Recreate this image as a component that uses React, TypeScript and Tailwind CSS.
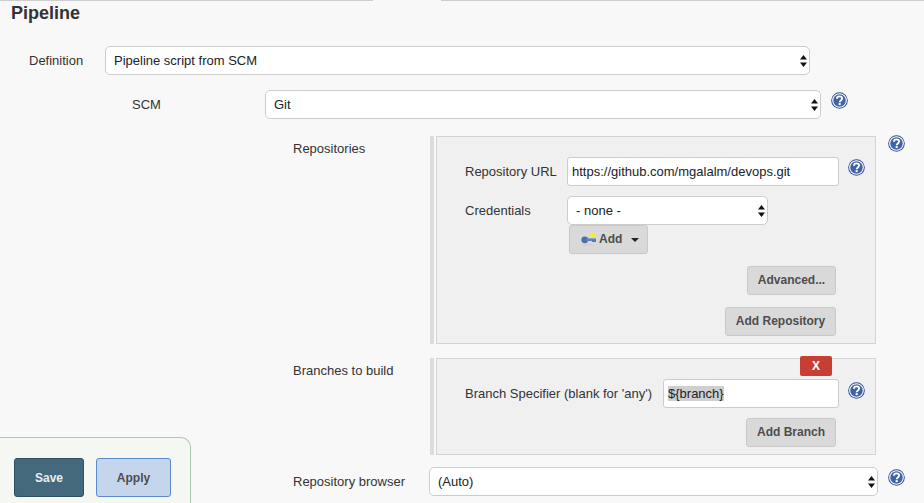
import React from "react";

const HelpIcon = ({ className = "" }: { className?: string }) => (
  <svg width="17" height="17" viewBox="0 0 17 17" className={`shrink-0 ${className}`}>
    <circle cx="8.5" cy="8.5" r="8.3" fill="#2f4c8f" />
    <circle cx="8.5" cy="8.5" r="6.8" fill="#3f62a8" stroke="#fff" strokeWidth="1.1" />
    <path
      d="M6 6.7C6 5.2 7.1 4.4 8.5 4.4s2.6.8 2.6 2.2c0 1.8-2.4 1.8-2.4 3.6"
      fill="none"
      stroke="#fff"
      strokeWidth="1.9"
    />
    <rect x="7.6" y="11.1" width="2.1" height="2" fill="#fff" />
  </svg>
);

const SelectBox = ({ value, className }: { value: string; className: string }) => (
  <div className={`relative h-[29px] shrink-0 ${className}`}>
    <select
      defaultValue={value}
      className="h-full w-full appearance-none rounded-[5px] border border-[#cccccc] bg-white pl-[8px] text-[13px] text-[#222] outline-none"
    >
      <option>{value}</option>
    </select>
    {/* up/down arrows */}
    <svg width="7" height="12" viewBox="0 0 7 12" className="absolute right-[3px] top-[9px]">
      <path d="M3.5 0L7 4.5H0z M3.5 12L0 7.5h7z" fill="#111" />
    </svg>
  </div>
);

const Button = ({ children, className }: { children: React.ReactNode; className: string }) => (
  <button
    className={`h-[29px] shrink-0 rounded-[3px] border border-[#c9c9c9] bg-[#d9d9d9] pb-[2px] text-[12px] font-bold text-[#4d4d4d] ${className}`}
  >
    {children}
  </button>
);

const KeyIcon = () => (
  <svg width="16" height="14" viewBox="0 0 16 14" className="shrink-0">
    <ellipse cx="7" cy="12.8" rx="6" ry="1" fill="#d0d0d0" />
    <circle cx="3.8" cy="7.8" r="3.4" fill="#4a6fa8" />
    <rect x="5" y="6.4" width="10" height="2.6" fill="#5f84bb" />
    <rect x="11" y="8.8" width="4" height="1" fill="#3f5f92" />
    <circle cx="11.8" cy="3.2" r="2.6" fill="#f5e84a" />
  </svg>
);

export default function App() {
  return (
    <div className="relative h-[503px] w-[924px] overflow-hidden bg-[#f8f8f8] font-['Liberation_Sans',Arial,sans-serif] text-[13px] text-[#333]">
      {/* Tab strip edge */}
      <div className="flex h-px">
        <div className="w-[373px] bg-[#cccccc]" />
        <div className="ml-[68px] flex-1 bg-[#cccccc]" />
      </div>

      <h2 className="mt-[3px] ml-[11px] h-[19px] text-[18px] leading-[19px] font-bold text-[#333]">Pipeline</h2>

      {/* Definition */}
      <div className="mt-[23px] flex items-center pl-[29px]">
        <label className="w-[76px] shrink-0">Definition</label>
        <SelectBox value="Pipeline script from SCM" className="w-[705px]" />
      </div>

      {/* SCM */}
      <div className="mt-[15px] flex items-center pl-[132px]">
        <label className="w-[133px] shrink-0">SCM</label>
        <SelectBox value="Git" className="w-[556px]" />
        <HelpIcon className="mt-[-9px] ml-[10px]" />
      </div>

      {/* Repositories */}
      <div className="mt-[17px] flex pl-[293px]">
        <label className="mt-[5px] w-[137px] shrink-0 leading-[15px]">Repositories</label>
        <div className="w-[4px] bg-[#dcdcdc]" />
        <div className="ml-[2px] flex h-[208px] w-[440px] flex-col border border-[#d4d4d4] bg-[#f0f0f0] pt-[20px] pl-[28px]">
          <div className="flex items-center">
            <label className="w-[102px] shrink-0">Repository URL</label>
            <input
              readOnly
              defaultValue="https://github.com/mgalalm/devops.git"
              className="h-[29px] w-[272px] shrink-0 rounded-[3px] border border-[#cccccc] bg-white pl-[4px] text-[13px] text-[#222] outline-none"
            />
            <HelpIcon className="mt-[-9px] ml-[9px]" />
          </div>
          <div className="mt-[10px] flex items-center">
            <label className="w-[102px] shrink-0">Credentials</label>
            <SelectBox value="- none -" className="w-[201px]" />
          </div>
          <div className="pl-[104px]">
            <Button className="flex w-[79px] items-center pl-[11px]">
              <KeyIcon />
              <span className="ml-[2px]">Add</span>
              <svg width="8" height="4" viewBox="0 0 8 4" className="ml-[9px] mt-[2px]">
                <path d="M0 0h8L4 4z" fill="#222" />
              </svg>
            </Button>
          </div>
          <Button className="mt-[12px] mr-[39px] w-[89px] self-end">Advanced...</Button>
          <Button className="mt-[12px] mr-[39px] w-[111px] self-end">Add Repository</Button>
        </div>
        <HelpIcon className="mt-[-1px] ml-[12px]" />
      </div>

      {/* Branches */}
      <div className="mt-[14px] flex pl-[293px]">
        <label className="mt-[5px] w-[137px] shrink-0 leading-[15px]">Branches to build</label>
        <div className="w-[4px] bg-[#dcdcdc]" />
        <div className="relative ml-[2px] flex h-[97px] w-[440px] flex-col border border-[#d4d4d4] bg-[#f0f0f0] pt-[20px] pl-[28px]">
          <button className="absolute top-[-3px] right-[43px] h-[20px] w-[32px] rounded-[2px] bg-[#c73e33] text-[12px] font-bold text-white">
            X
          </button>
          <div className="flex items-center">
            <label className="w-[198px] shrink-0">Branch Specifier (blank for 'any')</label>
            <div className="flex h-[29px] w-[176px] shrink-0 items-center rounded-[3px] border border-[#cccccc] bg-white pl-[4px] text-[#222]">
              <span className="bg-[#cfcfcf] leading-[15px]">{"${branch}"}</span>
            </div>
            <HelpIcon className="mt-[-7px] ml-[9px]" />
          </div>
          <Button className="mt-[10px] mr-[39px] w-[90px] self-end">Add Branch</Button>
        </div>
      </div>

      {/* Repository browser */}
      <div className="mt-[12px] flex items-center pl-[293px]">
        <label className="w-[136px] shrink-0">Repository browser</label>
        <SelectBox value="(Auto)" className="w-[449px]" />
        <HelpIcon className="mt-[-9px] ml-[10px]" />
      </div>

      {/* Sticky save bar */}
      <div className="absolute bottom-0 left-0 flex h-[66px] w-[191px] items-start gap-[12px] rounded-tr-[10px] border-t border-r border-[#a9c9b0] bg-[#f5f8f2] pt-[20px] pl-[14px]">
        <button className="h-[39px] w-[70px] rounded-[3px] border border-[#2f4f63] bg-[#44697d] text-[12px] font-bold text-[#e8eef2]">
          Save
        </button>
        <button className="h-[39px] w-[75px] rounded-[3px] border border-[#5c8ad0] bg-[#c5d6ec] text-[12px] font-bold text-[#4d4d4d]">
          Apply
        </button>
      </div>
    </div>
  );
}
